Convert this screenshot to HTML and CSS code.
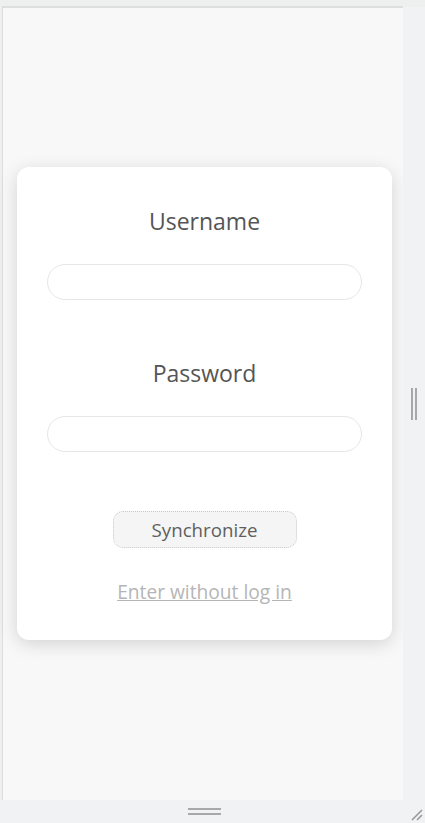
FILE: index.html
```html
<!DOCTYPE html>
<html>
<head>
<meta charset="utf-8">
<link rel="stylesheet" href="styles.css">
</head>
<body>
<div class="app">
  <div class="main">
    <div class="panel">
      <div class="card">
        <div class="label">Username</div>
        <input class="field" type="text">
        <div class="label label-pass">Password</div>
        <input class="field" type="password">
        <button class="sync">Synchronize</button>
        <a class="skip" href="#">Enter without log in</a>
      </div>
    </div>
    <div class="side">
      <div class="vgrip"><span></span><span></span></div>
    </div>
  </div>
  <div class="bottom">
    <div class="hgrip"><span></span><span></span></div>
    <svg class="resize" width="14" height="14" viewBox="0 0 14 14">
      <path d="M13 3 L3 13 M13 8 L8 13" stroke="#9a9a9a" stroke-width="1.6" fill="none"/>
    </svg>
  </div>
</div>
</body>
</html>
```
FILE: styles.css
```css
html, body {
  margin: 0;
  padding: 0;
  width: 425px;
  height: 823px;
  overflow: hidden;
  background: #eef0ef;
  font-family: "Open Sans", "Noto Sans", sans-serif;
}
.app {
  display: flex;
  flex-direction: column;
  height: 823px;
  padding-top: 6px;
  box-sizing: border-box;
}
.main {
  display: flex;
  flex: 1;
  min-height: 0;
}
.panel {
  width: 401px;
  margin-left: 2px;
  background: #f8f8f8;
  border-left: 1px solid #dcdcdc;
  border-top: 2px solid #dedede;
  box-sizing: border-box;
  display: flex;
  align-items: center;
  justify-content: flex-start;
  padding-left: 14px;
}
.side {
  flex: 1;
  background: #f1f2f4;
  margin-top: 1px;
  display: flex;
  align-items: center;
  justify-content: center;
  padding-top: 1px;
}
.vgrip {
  display: flex;
  gap: 2px;
}
.vgrip span {
  width: 2px;
  height: 32px;
  background: #a8a8a8;
}
.card {
  width: 375px;
  height: 473px;
  background: #fff;
  border-radius: 12px;
  box-shadow: 0 4px 18px rgba(0,0,0,0.15);
  box-sizing: border-box;
  display: flex;
  flex-direction: column;
  align-items: center;
  padding-top: 38px;
  margin-top: -1px;
}
.label {
  font-size: 23px;
  color: #555;
  line-height: 32px;
  height: 32px;
}
.label-pass {
  margin-top: 57px;
}
.field {
  margin-top: 27px;
  width: 315px;
  height: 36px;
  border: 1px solid #e6e6e6;
  border-radius: 18px;
  box-sizing: border-box;
  background: #fff;
  outline: none;
  padding: 0 14px;
}
.sync {
  margin-top: 59px;
  width: 184px;
  height: 37px;
  background: #f5f5f5;
  border: 1px dotted #c8c8c8;
  border-radius: 10px;
  font-family: inherit;
  font-size: 18.7px;
  color: #5f5f5f;
  padding: 0;
  box-sizing: border-box;
}
.skip {
  margin-top: 32px;
  font-size: 19.2px;
  color: #b5b5b5;
  text-decoration: underline;
  line-height: 24px;
}
.bottom {
  height: 23px;
  background: #f1f2f4;
  position: relative;
  display: flex;
  justify-content: center;
  align-items: center;
}
.hgrip {
  display: flex;
  flex-direction: column;
  gap: 3px;
  margin-right: 17px;
}
.hgrip span {
  width: 33px;
  height: 2px;
  background: #a8a8a8;
}
.resize {
  position: absolute;
  right: 2px;
  bottom: 2px;
}
```
